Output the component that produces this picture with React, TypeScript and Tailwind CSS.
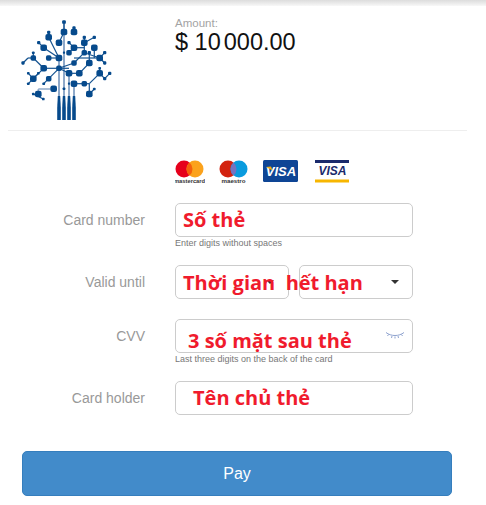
const nodes: [number, number, number][] = [
  [64, 22, 1.7], [64, 32, 3], [74, 28, 1.5], [74, 32, 3], [48.7, 32.3, 1.5], [48.7, 37.3, 3], [59, 42.7, 3],
  [38.7, 42.7, 1.5], [43.7, 47.7, 3], [69, 42.7, 1.5], [74, 47.7, 3], [69, 52.7, 2.5], [64, 52.7, 1],
  [84.3, 37.3, 1.5], [84.3, 42.7, 3], [94.3, 37.3, 1.5], [94.3, 47.7, 3], [84.3, 52.7, 2.5], [89.3, 52.7, 1.5],
  [89.3, 63, 3], [99.7, 58, 3], [104.7, 52.7, 1.5], [104.7, 63, 1.5], [74, 63, 2.5], [59, 58, 3], [48.7, 58, 2.5],
  [33.3, 52.7, 1.2], [33.3, 58, 2.5], [23, 63, 1.5], [43.7, 68.3, 3], [59, 68.3, 2.5], [69, 73.3, 3], [79.3, 73.3, 3],
  [99.7, 73.3, 3], [99.7, 68.3, 1.2], [109.7, 73.3, 1.5], [104.7, 78.7, 1.5], [33.3, 78.7, 3], [28.3, 73.3, 1.2],
  [38.3, 73.3, 1.2], [28.3, 83.7, 1.2], [48.7, 78.7, 2.5], [43.7, 83.7, 1.2], [74, 83.7, 3], [84.3, 83.7, 2.5],
  [89.3, 94, 3], [94.3, 89, 1.2], [69, 83.7, 1], [53.7, 88.7, 3], [64, 88.7, 1.2], [38.3, 94, 3], [33.3, 94, 1.2],
  [43.3, 99, 1.2],
]

const lines: [number, number, number, number][] = [
  [64, 22, 64, 32], [74, 28, 74, 32], [48.7, 32.3, 48.7, 37.3], [64, 32, 59, 42.7], [48.7, 37.3, 59, 58],
  [38.7, 42.7, 43.7, 47.7], [43.7, 47.7, 59, 58], [69, 42.7, 74, 47.7], [74, 47.7, 84.3, 47.7], [84.3, 37.3, 84.3, 52.7],
  [94.3, 37.3, 84.3, 42.7], [94.3, 47.7, 94.3, 58], [84.3, 52.7, 99.7, 58], [74, 63, 84.3, 52.7], [74, 47.7, 69, 52.7],
  [89.3, 52.7, 89.3, 63], [89.3, 63, 79.3, 73.3], [74, 58, 99.7, 58], [104.7, 52.7, 99.7, 58], [104.7, 63, 99.7, 58],
  [74, 63, 59, 68.3], [48.7, 58, 59, 58], [33.3, 52.7, 33.3, 58], [23, 63, 28, 58], [28, 58, 33.3, 58], [33.3, 58, 43.7, 68.3],
  [43.7, 68.3, 69, 68.3], [59, 68.3, 69, 73.3], [69, 73.3, 79.3, 73.3], [99.7, 68.3, 99.7, 73.3], [99.7, 73.3, 104.7, 78.7],
  [104.7, 78.7, 109.7, 73.3], [99.7, 73.3, 89.3, 83.7], [43.7, 68.3, 33.3, 78.7], [28.3, 73.3, 33.3, 78.7], [38.3, 73.3, 33.3, 78.7],
  [28.3, 83.7, 33.3, 78.7], [59, 68.3, 48.7, 78.7], [48.7, 78.7, 43.7, 83.7], [74, 83.7, 89.3, 83.7], [89.3, 83.7, 89.3, 94],
  [94.3, 89, 89.3, 94], [33.3, 94, 43.3, 99],
]

const TreeLogo = () => (
  <svg width="130" height="125" viewBox="0 0 130 125" className="block">
    {[59, 64, 69, 74].map((x) => (
      <g key={x}>
        <line x1={x} y1={x === 64 ? 22 : x === 74 ? 84 : x === 59 ? 58 : 74} x2={x} y2="97" stroke="#8fa9c9" strokeWidth="2" />
        <path d={`M${x - 1.2} 96 h2.4 l0.6 12 v12 h-3.600 v-12 z`} fill="#064a8c" />
      </g>
    ))}
    <line x1="38.3" y1="94" x2="38.3" y2="89" stroke="#8fa9c9" strokeWidth="1.5" />
    <line x1="38.3" y1="89" x2="53.7" y2="89" stroke="#8fa9c9" strokeWidth="1.5" />
    {lines.map(([x1, y1, x2, y2], i) => (
      <line key={i} x1={x1} y1={y1} x2={x2} y2={y2} stroke="#14528f" strokeWidth="1.2" />
    ))}
    {nodes.map(([x, y, r], i) => (
      <rect key={i} x={x - r * 1.1} y={y - r * 1.1} width={r * 2.2} height={r * 2.2} rx={r * 0.7} fill="#064a8c" />
    ))}
  </svg>
)

const CardLogos = () => (
  <div className="flex items-start h-[26px]">
    <svg width="30" height="26" viewBox="0 0 30 26">
      <circle cx="9" cy="9" r="8.5" fill="#e6001c" />
      <circle cx="20" cy="9" r="8.5" fill="#fba21c" />
      <path d="M14.5 2.500a8.5 8.5 0 0 1 0 13a8.5 8.5 0 0 1 0-13z" fill="#f4600c" />
      <text x="14.5" y="23" fontSize="5.8" fontWeight="bold" textAnchor="middle" fill="#333" fontFamily="Liberation Sans, sans-serif">mastercard</text>
    </svg>
    <svg width="30" height="26" viewBox="0 0 30 26" className="ml-[14px]">
      <circle cx="9" cy="9" r="8.5" fill="#d3230f" />
      <circle cx="20" cy="9" r="8.5" fill="#0a9bde" />
      <path d="M14.5 2.500a8.5 8.5 0 0 1 0 13a8.5 8.5 0 0 1 0-13z" fill="#7673c0" />
      <text x="14.5" y="23" fontSize="6.2" fontWeight="bold" textAnchor="middle" fill="#333" fontFamily="Liberation Sans, sans-serif">maestro</text>
    </svg>
    <svg width="35" height="22" viewBox="0 0 35 22" className="ml-[14px]">
      <rect width="35" height="22" rx="1.5" fill="#0e4595" />
      <text x="18" y="16" fontSize="13" fontWeight="bold" fontStyle="italic" textAnchor="middle" fill="#fff" fontFamily="Liberation Sans, sans-serif">VISA</text>
      <path d="M3 7l5-0.5 1.5 4z" fill="#f2ae14" />
    </svg>
    <svg width="35" height="23" viewBox="0 0 35 23" className="ml-[17px]">
      <rect width="34" height="3" x="0" fill="#1a2a6c" />
      <text x="17.5" y="15" fontSize="12" fontWeight="bold" fontStyle="italic" textAnchor="middle" fill="#1a2a6c" fontFamily="Liberation Sans, sans-serif">VISA</text>
      <rect width="34" height="3" y="19.5" fill="#f7b600" />
    </svg>
  </div>
)

const Caret = () => (
  <span className="w-0 h-0 border-x-[4px] border-x-transparent border-t-[4px] border-t-[#333]" />
)

const labelCls = "w-[145px] mr-[30px] text-right text-[14px] text-[#999] shrink-0"
const boxCls = "h-[34px] border border-[#ccc] rounded-[5px] bg-white"
const redCls = "font-['Open_Sans','Noto_Sans',sans-serif] font-bold text-[20px] leading-none text-[#f01b2d] whitespace-nowrap"
const hintCls = "ml-[175px] text-[9px] leading-[12px] text-[#777]"

export default function App() {
  return (
    <div className="w-[486px] h-[505px] bg-white overflow-hidden font-['Liberation_Sans',Arial,sans-serif]">
      <div className="h-[6px] bg-gradient-to-b from-[#dcdcdc] to-[#f8f8f8]" />
      <div className="flex h-[124px]">
        <div className="w-[175px] -mt-[6px] shrink-0">
          <TreeLogo />
        </div>
        <div className="pt-[10px]">
          <div className="text-[11.5px] leading-[14px] text-[#a3a3a3]">Amount:</div>
          <div className="text-[23.5px] leading-[26px] text-[#111] mt-[-1px]">$ 10<span className="ml-[3px]">000.00</span></div>
        </div>
      </div>
      <div className="h-px bg-[#eeeeee] mx-[8px] w-[459px]" />

      <div className="pl-[175px] pt-[29px]">
        <CardLogos />
      </div>

      <div className="mt-[17px] flex items-center">
        <div className={labelCls}>Card number</div>
        <div className={`${boxCls} w-[238px] flex items-center pl-[7px]`}>
          <span className={redCls}>Số thẻ</span>
        </div>
      </div>
      <div className={hintCls}>Enter digits without spaces</div>

      <div className="mt-[16px] flex items-center relative">
        <div className={labelCls}>Valid until</div>
        <div className={`${boxCls} w-[114px] flex items-center justify-end pr-[14px]`}>
          <Caret />
        </div>
        <div className={`${boxCls} w-[114px] ml-[10px] flex items-center justify-end pr-[13px]`}>
          <Caret />
        </div>
        <span className={`${redCls} absolute left-[183px] top-[8px] whitespace-pre`}>Thời gian  hết hạn</span>
      </div>

      <div className="mt-[20px] flex items-center">
        <div className={labelCls}>CVV</div>
        <div className={`${boxCls} w-[238px] relative flex items-center pl-[12px] pt-[9px]`}>
          <span className={redCls}>3 số mặt sau thẻ</span>
          <svg width="20" height="8" viewBox="0 0 20 8" className="absolute right-[7px] top-[11px]" fill="none" stroke="#8fa3cf" strokeWidth="1">
            <path d="M1 1.5c5 4 13 4 18 0" />
            <path d="M3.5 3.5l-1 1.5M7 5l-.5 2M10 5.5V7.5M13 5l.5 2M16.500 3.500l1 1.500" />
          </svg>
        </div>
      </div>
      <div className={hintCls}>Last three digits on the back of the card</div>

      <div className="mt-[16px] flex items-center">
        <div className={labelCls}>Card holder</div>
        <div className={`${boxCls} w-[238px] flex items-center pl-[17px]`}>
          <span className={redCls}>Tên chủ thẻ</span>
        </div>
      </div>

      <button className="block ml-[22px] mt-[36px] w-[430px] h-[45px] bg-[#428bca] border border-[#357ebd] rounded-[5px] text-white text-[16px]">
        Pay
      </button>
    </div>
  )
}
